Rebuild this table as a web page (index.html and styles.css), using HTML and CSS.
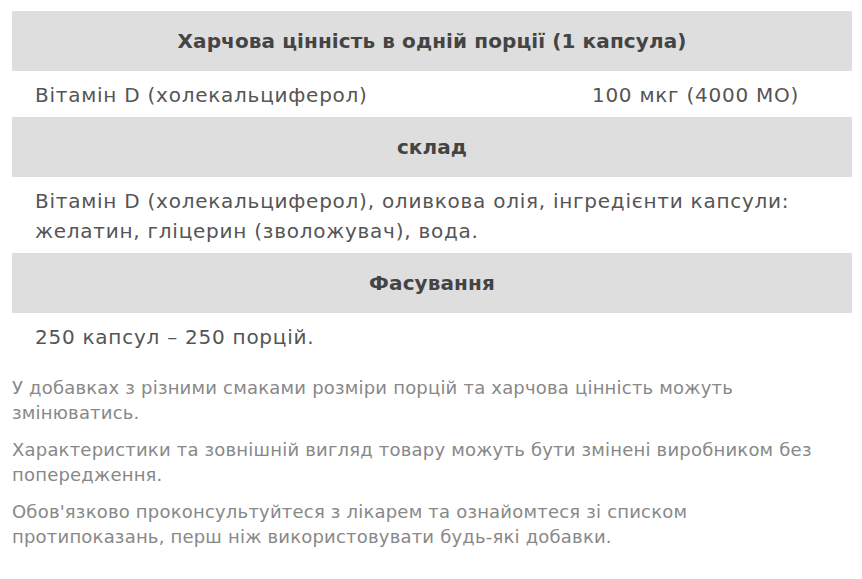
FILE: index.html
```html
<!DOCTYPE html>
<html lang="uk">
<head>
<meta charset="utf-8">
<link rel="stylesheet" href="styles.css">
</head>
<body>
<div class="wrap">
  <table class="facts">
    <tr><th colspan="2">Харчова цінність в одній порції (1 капсула)</th></tr>
    <tr><td class="name">Вітамін D (холекальциферол)</td><td class="val">100 мкг (4000 МО)</td></tr>
    <tr><th colspan="2">склад</th></tr>
    <tr><td colspan="2">Вітамін D (холекальциферол), оливкова олія, інгредієнти капсули: желатин, гліцерин (зволожувач), вода.</td></tr>
    <tr><th colspan="2">Фасування</th></tr>
    <tr><td colspan="2">250 капсул – 250 порцій.</td></tr>
  </table>
  <div class="notes">
    <p>У добавках з різними смаками розміри порцій та харчова цінність можуть змінюватись.</p>
    <p>Характеристики та зовнішній вигляд товару можуть бути змінені виробником без попередження.</p>
    <p>Обов'язково проконсультуйтеся з лікарем та ознайомтеся зі списком протипоказань, перш ніж використовувати будь-які добавки.</p>
  </div>
</div>
</body>
</html>
```
FILE: styles.css
```css
html, body {
  margin: 0;
  padding: 0;
  background: #ffffff;
}
body {
  font-family: "DejaVu Sans", "Open Sans", sans-serif;
  color: #555555;
}
.wrap {
  padding: 11px 10px 0 12px;
}
.facts {
  width: 840px;
  border-collapse: collapse;
  font-size: 20px;
  letter-spacing: 0.75px;
}
.facts th {
  background: #dedede;
  color: #444444;
  font-weight: 700;
  text-align: center;
  line-height: 30px;
  padding: 15px 23px;
  letter-spacing: 0.1px;
}
.facts td {
  line-height: 30px;
  padding: 9px 23px 7px;
  text-align: left;
  vertical-align: top;
  color: #555555;
}
.facts td.name {
  width: 66.3%;
  box-sizing: border-box;
}
.notes {
  margin-top: 16px;
  width: 830px;
  color: #888888;
  font-size: 18px;
  letter-spacing: 0.2px;
}
.notes p {
  margin: 0 0 12px 0;
  line-height: 25px;
}
```
